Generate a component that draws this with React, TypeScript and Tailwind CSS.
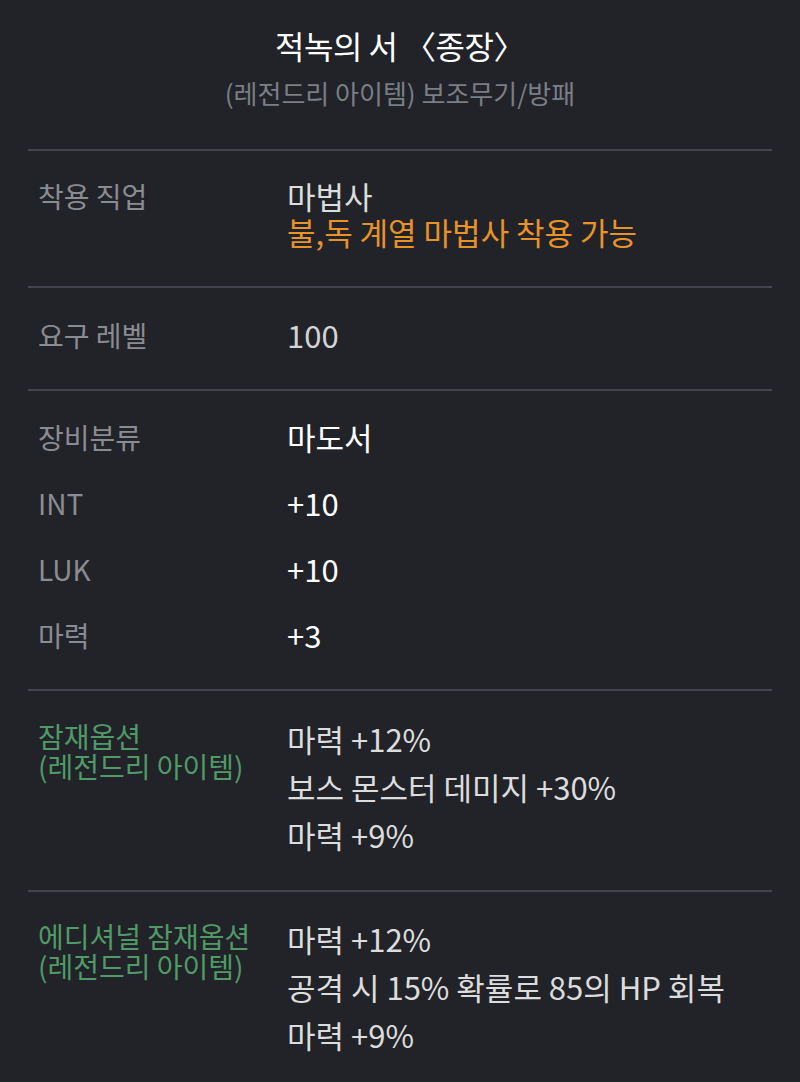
import React from "react";

const font = { fontFamily: '"Noto Sans CJK KR", "Noto Sans", sans-serif' };

function Section({ children, className = "" }: { children: React.ReactNode; className?: string }) {
  return <div className={`border-t-2 border-[#42454d] px-[10px] ${className}`}>{children}</div>;
}

function Row({ label, children, labelClass = "text-[#8a8c92]" }: { label: React.ReactNode; children: React.ReactNode; labelClass?: string }) {
  return (
    <div className="flex">
      <div className={`w-[249px] shrink-0 text-[28px] leading-[36px] ${labelClass}`}>{label}</div>
      <div className="flex-1">{children}</div>
    </div>
  );
}

export default function App() {
  return (
    <div className="min-h-[1082px] w-[800px] bg-[#212329] px-[28px]" style={font}>
      {/* 헤더 */}
      <div className="flex flex-col items-center pt-[25px] pb-[41px]">
        <h1 className="text-[32px] leading-[40px] tracking-[-0.5px] text-white">적녹의 서 〈종장〉</h1>
        <p className="mt-[13px] text-[26px] leading-[30px] text-[#7b7e85]">(레전드리 아이템) 보조무기/방패</p>
      </div>

      {/* 착용 직업 */}
      <Section className="pt-[27px] pb-[36px]">
        <Row label="착용 직업">
          <p className="text-[31px] leading-[36px] text-[#dcdcdc]">마법사</p>
          <p className="text-[31px] leading-[36px] text-[#e8922a]">불,독 계열 마법사 착용 가능</p>
        </Row>
      </Section>

      {/* 요구 레벨 */}
      <Section className="pt-[29px] pb-[36px]">
        <Row label="요구 레벨">
          <p className="text-[31px] leading-[36px] text-[#d4d4d6]">100</p>
        </Row>
      </Section>

      {/* 장비 스탯 */}
      <Section className="flex flex-col gap-[30px] pt-[28px] pb-[36px]">
        <Row label="장비분류">
          <p className="text-[31px] leading-[36px] text-white">마도서</p>
        </Row>
        <Row label="INT">
          <p className="text-[31px] leading-[36px] text-white">+10</p>
        </Row>
        <Row label="LUK">
          <p className="text-[31px] leading-[36px] text-white">+10</p>
        </Row>
        <Row label="마력">
          <p className="text-[31px] leading-[36px] text-white">+3</p>
        </Row>
      </Section>

      {/* 잠재옵션 */}
      <Section className="pt-[30px] pb-[37px]">
        <Row
          labelClass="text-[#4f9a66]"
          label={
            <div className="leading-[30px]">
              <p>잠재옵션</p>
              <p>(레전드리 아이템)</p>
            </div>
          }
        >
          <div className="flex flex-col gap-[12px] text-[31px] leading-[36px] text-[#dcdcdc]">
            <p>마력 +12%</p>
            <p>보스 몬스터 데미지 +30%</p>
            <p>마력 +9%</p>
          </div>
        </Row>
      </Section>

      {/* 에디셔널 잠재옵션 */}
      <Section className="pt-[29px] pb-[30px]">
        <Row
          labelClass="text-[#4f9a66]"
          label={
            <div className="leading-[30px]">
              <p>에디셔널 잠재옵션</p>
              <p>(레전드리 아이템)</p>
            </div>
          }
        >
          <div className="flex flex-col gap-[12px] text-[31px] leading-[36px] text-[#dcdcdc]">
            <p>마력 +12%</p>
            <p>공격 시 15% 확률로 85의 HP 회복</p>
            <p>마력 +9%</p>
          </div>
        </Row>
      </Section>
    </div>
  );
}
